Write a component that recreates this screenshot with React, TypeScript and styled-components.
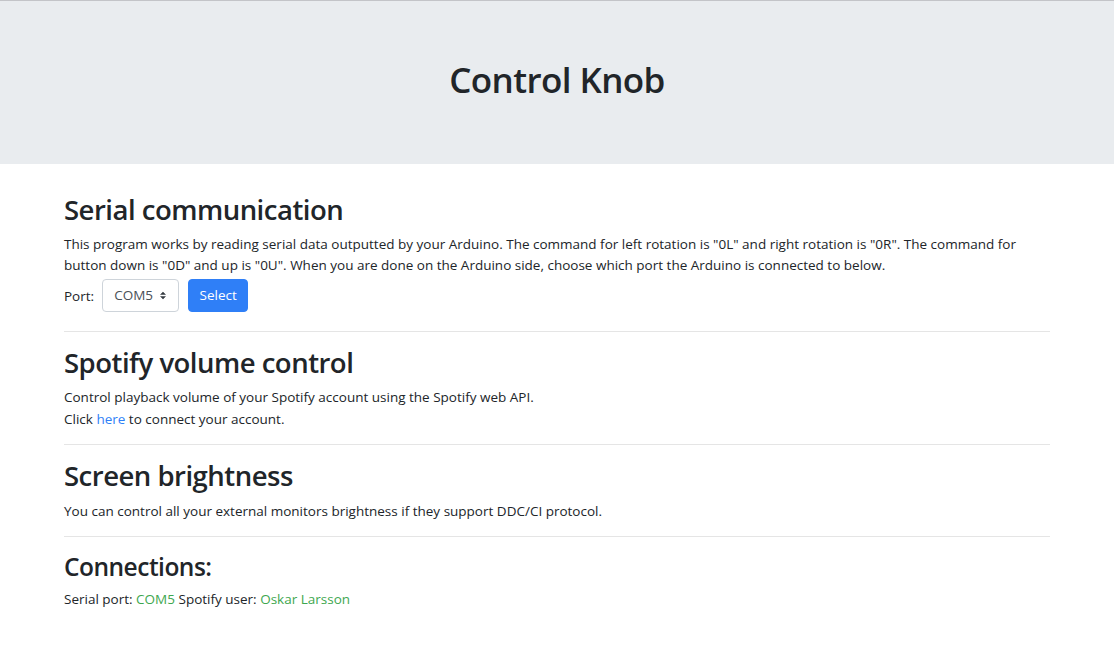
import React from "react";
import styled, { createGlobalStyle } from "styled-components";

const GlobalStyle = createGlobalStyle`
  html, body { margin: 0; padding: 0; background: #fff; }
  body {
    font-family: "Open Sans", "Noto Sans", "Liberation Sans", sans-serif;
    font-size: 13.5px;
    line-height: 21.4px;
    color: #212529;
  }
  * { box-sizing: border-box; }
`;

const Page = styled.div`
  border-top: 1px solid #c3c4c8;
`;

const Jumbotron = styled.header`
  background: #e9ecef;
  height: 163px;
  display: flex;
  align-items: center;
  justify-content: center;
`;

const Title = styled.h1`
  margin: 0 0 4px;
  font-size: 35px;
  font-weight: 600;
  letter-spacing: -0.6px;
  line-height: 42.7px;
`;

const Main = styled.main`
  padding: 28.5px 64px 40px;
`;

const Section = styled.section``;

const Heading = styled.h2<{ $small?: boolean }>`
  margin: 0 0 7.1px;
  font-size: ${(p) => (p.$small ? "24.5px" : "27.5px")};
  line-height: ${(p) => (p.$small ? "29.9px" : "34.2px")};
  font-weight: 600;
  letter-spacing: -0.5px;
`;

const Text = styled.p`
  margin: 0;
`;

const Link = styled.a`
  color: #2f7ff7;
  text-decoration: none;
`;

const Status = styled.span`
  color: #3ea74f;
`;

const Divider = styled.hr`
  margin: 14.25px 0;
  border: 0;
  border-top: 1px solid rgba(0, 0, 0, 0.1);
`;

const PortRow = styled.form`
  display: flex;
  align-items: center;
  padding: 2px 0 4.75px;
  margin: 0;
`;

const Label = styled.label`
  margin-right: 8px;
  padding-top: 3px;
`;

const Select = styled.select`
  appearance: none;
  -webkit-appearance: none;
  height: 33px;
  width: 77px;
  padding: 2px 20px 0 11px;
  font: inherit;
  color: #495057;
  background: #fff
    url("data:image/svg+xml,%3csvg xmlns='http://www.w3.org/2000/svg' width='4' height='5' viewBox='0 0 4 5'%3e%3cpath fill='%23343a40' d='M2 0L0 2h4zm0 5L0 3h4z'/%3e%3c/svg%3e")
    no-repeat right 12px center / 6px 9px;
  border: 1px solid #ced4da;
  border-radius: 4px;
  margin-right: 9px;
`;

const Button = styled.button`
  height: 33px;
  width: 60px;
  padding: 2px 0 0;
  font: inherit;
  color: #fff;
  background: #2f7ff7;
  border: 1px solid #2f7ff7;
  border-radius: 4px;
`;

export default function App() {
  return (
    <>
      <GlobalStyle />
      <Page>
        <Jumbotron>
          <Title>Control Knob</Title>
        </Jumbotron>
        <Main>
          <Section>
            <Heading>Serial communication</Heading>
            <Text>
              This program works by reading serial data outputted by your Arduino. The command for left
              rotation is "0L" and right rotation is "0R". The command for button down is "0D" and up is
              "0U". When you are done on the Arduino side, choose which port the Arduino is connected to
              below.
            </Text>
            <PortRow onSubmit={(e) => e.preventDefault()}>
              <Label htmlFor="port">Port:</Label>
              <Select id="port" defaultValue="COM5">
                <option value="COM5">COM5</option>
              </Select>
              <Button type="submit">Select</Button>
            </PortRow>
          </Section>
          <Divider />
          <Section>
            <Heading>Spotify volume control</Heading>
            <Text>Control playback volume of your Spotify account using the Spotify web API.</Text>
            <Text>
              Click <Link href="#">here</Link> to connect your account.
            </Text>
          </Section>
          <Divider />
          <Section>
            <Heading>Screen brightness</Heading>
            <Text>You can control all your external monitors brightness if they support DDC/CI protocol.</Text>
          </Section>
          <Divider />
          <Section>
            <Heading $small>Connections:</Heading>
            <Text>
              Serial port: <Status>COM5</Status> Spotify user: <Status>Oskar Larsson</Status>
            </Text>
          </Section>
        </Main>
      </Page>
    </>
  );
}
